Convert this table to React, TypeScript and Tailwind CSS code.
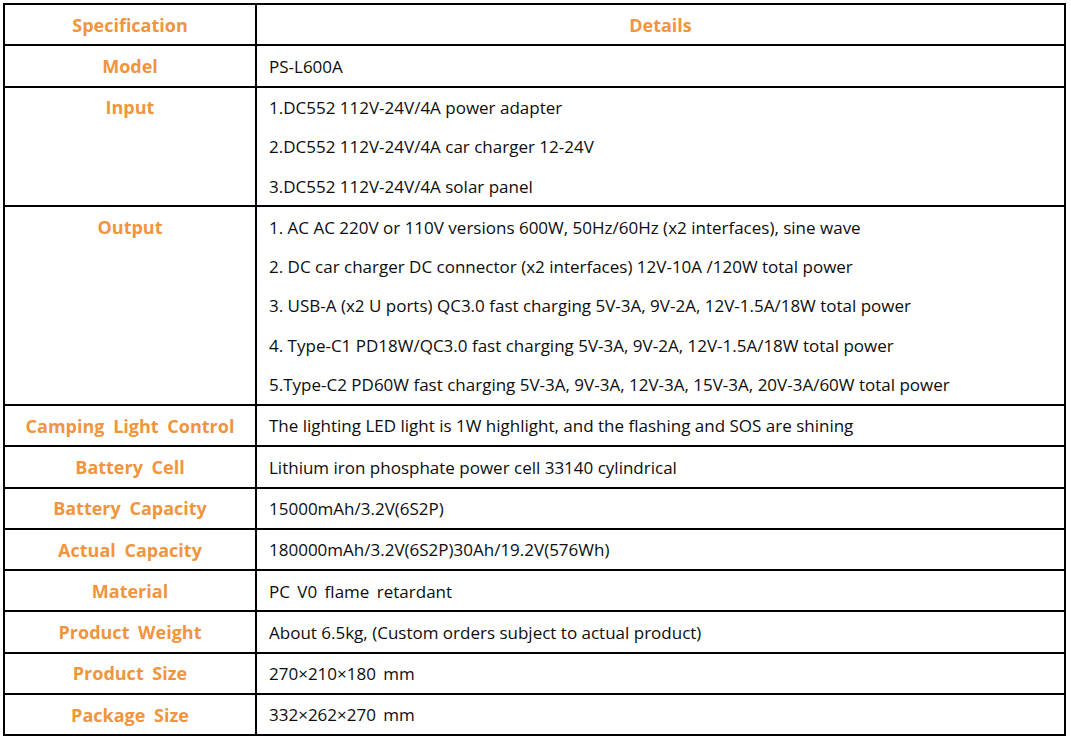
const rows: { label: string; lines: string[]; wide?: boolean }[] = [
  { label: "Model", lines: ["PS-L600A"] },
  {
    label: "Input",
    lines: [
      "1.DC552 112V-24V/4A power adapter",
      "2.DC552 112V-24V/4A car charger 12-24V",
      "3.DC552 112V-24V/4A solar panel",
    ],
  },
  {
    label: "Output",
    lines: [
      "1. AC AC 220V or 110V versions 600W, 50Hz/60Hz (x2 interfaces), sine wave",
      "2. DC car charger DC connector (x2 interfaces) 12V-10A /120W total power",
      "3. USB-A (x2 U ports) QC3.0 fast charging 5V-3A, 9V-2A, 12V-1.5A/18W total power",
      "4. Type-C1 PD18W/QC3.0 fast charging 5V-3A, 9V-2A, 12V-1.5A/18W total power",
      "5.Type-C2 PD60W fast charging 5V-3A, 9V-3A, 12V-3A, 15V-3A, 20V-3A/60W total power",
    ],
  },
  {
    label: "Camping Light Control",
    lines: ["The lighting LED light is 1W highlight, and the flashing and SOS are shining"],
  },
  { label: "Battery Cell", lines: ["Lithium iron phosphate power cell 33140 cylindrical"] },
  { label: "Battery Capacity", lines: ["15000mAh/3.2V(6S2P)"], wide: true },
  { label: "Actual Capacity", lines: ["180000mAh/3.2V(6S2P)30Ah/19.2V(576Wh)"], wide: true },
  { label: "Material", lines: ["PC V0 flame retardant"], wide: true },
  { label: "Product Weight", lines: ["About 6.5kg, (Custom orders subject to actual product)"] },
  { label: "Product Size", lines: ["270×210×180 mm"], wide: true },
  { label: "Package Size", lines: ["332×262×270 mm"], wide: true },
];

const Label = ({ text }: { text: string }) => (
  <div className="h-[39.3px] pt-px flex items-center justify-center font-bold text-[18px] text-[#f0953d] [word-spacing:4px]">
    {text}
  </div>
);

export default function App() {
  return (
    <div className="bg-white w-[1071px] h-[741px] pt-[3px] pl-[3px] font-['Open_Sans',sans-serif] text-[#0d0d0d]">
      <div className="w-[1063px] border-2 border-black flex flex-col">
        <div className="flex border-b-2 border-black">
          <div className="w-[252px] border-r-2 border-black">
            <Label text="Specification" />
          </div>
          <div className="flex-1">
            <Label text="Details" />
          </div>
        </div>
        {rows.map((row, i) => (
          <div
            key={row.label}
            className={`flex ${i < rows.length - 1 ? "border-b-2 border-black" : ""}`}
          >
            <div className="w-[252px] border-r-2 border-black">
              <Label text={row.label} />
            </div>
            <div className="flex-1 flex flex-col">
              {row.lines.map((line) => (
                <div
                  key={line}
                  className={`h-[39.3px] pt-px flex items-center pl-[12px] text-[17px] whitespace-nowrap ${
                    row.wide ? "[word-spacing:3px]" : ""
                  }`}
                >
                  {line}
                </div>
              ))}
            </div>
          </div>
        ))}
      </div>
    </div>
  );
}
